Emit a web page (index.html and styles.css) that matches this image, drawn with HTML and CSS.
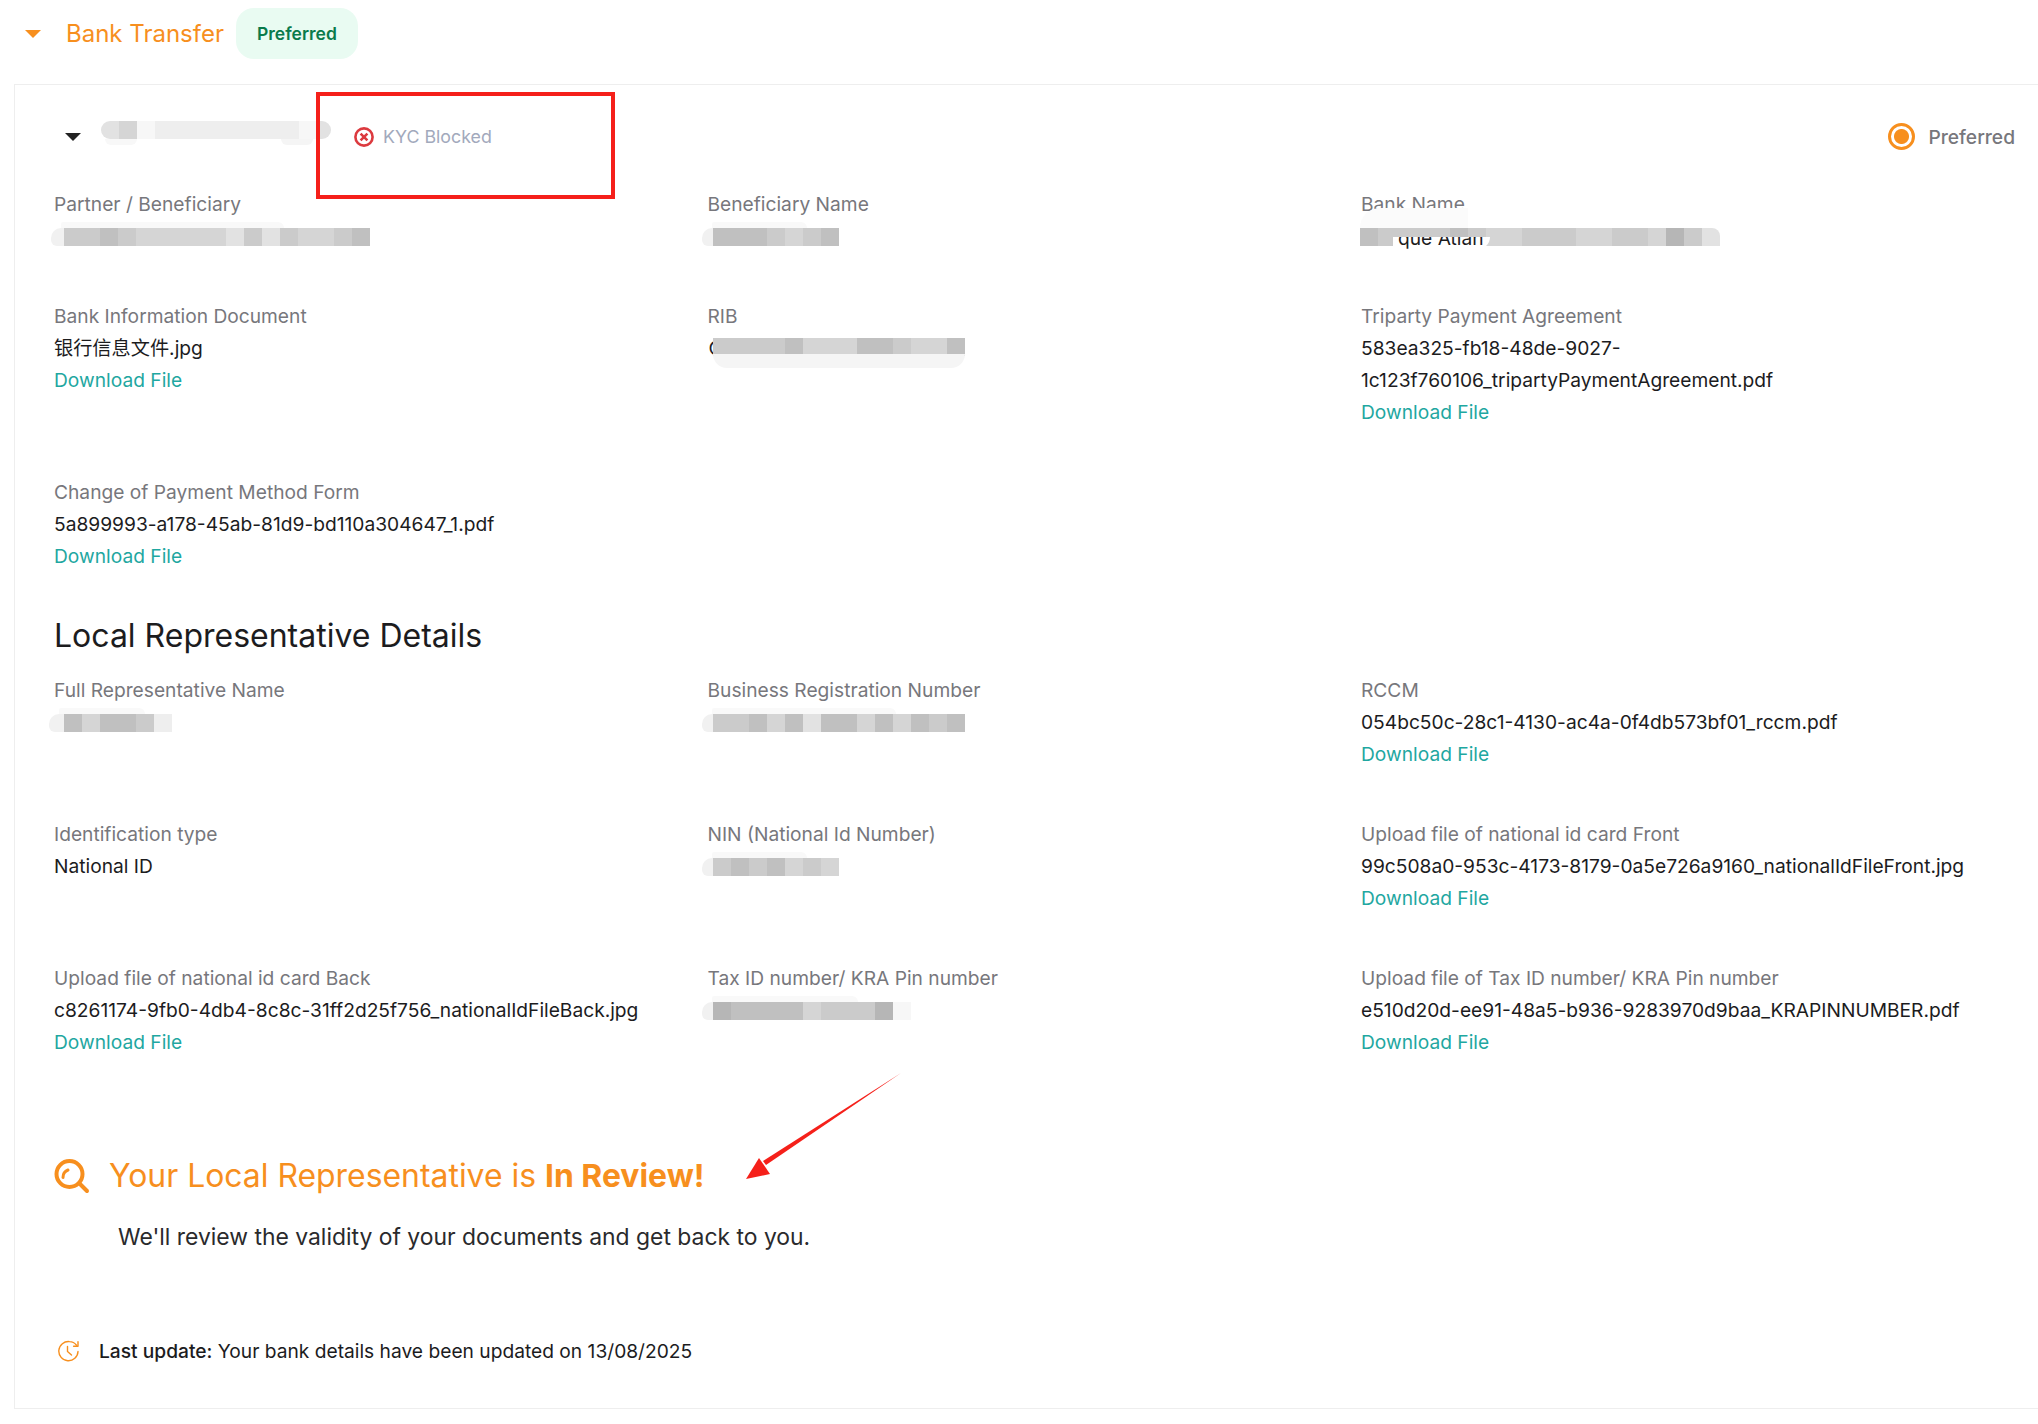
FILE: index.html

```html
<!DOCTYPE html>
<html lang="en">
<head>
    <meta charset="UTF-8">
    <meta name="viewport" content="width=device-width, initial-scale=1.0">
    <title>Bank Transfer</title>
    <link rel="stylesheet" href="styles.css">
</head>
<body>
    <!-- Method header -->
    <div class="method-head">
        <svg class="caret-orange" width="16" height="8" viewBox="0 0 16 8"><path d="M0 0h16L8 8z" fill="#f78f1e"/></svg>
        <span class="method-title">Bank Transfer</span>
        <span class="badge">Preferred</span>
    </div>

    <div class="card">
        <!-- Account row -->
        <div class="account-row">
            <svg class="caret-dark" width="16" height="8" viewBox="0 0 16 8"><path d="M0 0h16L8 8z" fill="#222"/></svg>
            <div class="redact account-name">
                <i class="s4"></i><i class="s3"></i><i class="s6"></i><i class="s5"></i><i class="s5"></i><i class="s5"></i><i class="s5"></i><i class="s5"></i><i class="s5"></i><i class="s5"></i><i class="s5"></i><i class="s6"></i><i class="s4"></i>
            </div>
            <div class="kyc">
                <svg width="20" height="20" viewBox="0 0 20 20" fill="none" stroke="#dc3a3f" stroke-width="2.6"><circle cx="10" cy="10" r="8.6"/><path d="M6.6 6.6l6.8 6.8M13.4 6.6l-6.8 6.8"/></svg>
                <span>KYC Blocked</span>
            </div>
            <div class="preferred-radio">
                <span class="radio"></span>
                <span>Preferred</span>
            </div>
        </div>

        <div class="grid">
            <div class="field">
                <div class="label">Partner / Beneficiary</div>
                <div class="redact w-partner">
                    <i class="lead"></i><i class="s2"></i><i class="s2"></i><i class="s1"></i><i class="s2"></i><i class="s3"></i><i class="s3"></i><i class="s3"></i><i class="s3"></i><i class="s3"></i><i class="s4"></i><i class="s2"></i><i class="s4"></i><i class="s2"></i><i class="s3"></i><i class="s3"></i><i class="s2"></i><i class="s1"></i>
                </div>
            </div>
            <div class="field">
                <div class="label">Beneficiary Name</div>
                <div class="redact w-lead">
                    <i class="lead"></i><i class="s1"></i><i class="s1"></i><i class="s1"></i><i class="s2"></i><i class="s3"></i><i class="s2"></i><i class="s1"></i>
                </div>
            </div>
            <div class="field">
                <div class="label">Bank Name</div>
                <div class="redact w-bank">
                    <i class="s1"></i><i class="s2"></i><i class="s2"></i><i class="s2"></i><i class="s2"></i><i class="s1"></i><i class="s2"></i><i class="s3"></i><i class="s3"></i><i class="s2"></i><i class="s2"></i><i class="s2"></i><i class="s3"></i><i class="s3"></i><i class="s2"></i><i class="s2"></i><i class="s3"></i><i class="s0"></i><i class="s2"></i><i class="s4"></i>
                    <span class="peek">que Atlan</span>
                </div>
            </div>

            <div class="field">
                <div class="label">Bank Information Document</div>
                <div class="value">银行信息文件.jpg</div>
                <a class="link" href="#">Download File</a>
            </div>
            <div class="field">
                <div class="label">RIB</div>
                <div class="redact w-rib">
                    <span class="under">C</span>
                    <i class="s2"></i><i class="s2"></i><i class="s2"></i><i class="s2"></i><i class="s1"></i><i class="s3"></i><i class="s3"></i><i class="s3"></i><i class="s1"></i><i class="s1"></i><i class="s2"></i><i class="s3"></i><i class="s3"></i><i class="s1"></i>
                </div>
            </div>
            <div class="field">
                <div class="label">Triparty Payment Agreement</div>
                <div class="value">583ea325-fb18-48de-9027-<br>1c123f760106_tripartyPaymentAgreement.pdf</div>
                <a class="link" href="#">Download File</a>
            </div>

            <div class="field">
                <div class="label">Change of Payment Method Form</div>
                <div class="value">5a899993-a178-45ab-81d9-bd110a304647_1.pdf</div>
                <a class="link" href="#">Download File</a>
            </div>
        </div>

        <h2 class="section-title">Local Representative Details</h2>

        <div class="grid">
            <div class="field">
                <div class="label">Full Representative Name</div>
                <div class="redact w-rep">
                    <i class="lead"></i><i class="s1"></i><i class="s3"></i><i class="s1"></i><i class="s1"></i><i class="s2"></i><i class="s5"></i>
                </div>
            </div>
            <div class="field">
                <div class="label">Business Registration Number</div>
                <div class="redact w-lead">
                    <i class="lead"></i><i class="s2"></i><i class="s2"></i><i class="s1"></i><i class="s3"></i><i class="s1"></i><i class="s4"></i><i class="s1"></i><i class="s1"></i><i class="s3"></i><i class="s1"></i><i class="s3"></i><i class="s1"></i><i class="s2"></i><i class="s1"></i>
                </div>
            </div>
            <div class="field">
                <div class="label">RCCM</div>
                <div class="value">054bc50c-28c1-4130-ac4a-0f4db573bf01_rccm.pdf</div>
                <a class="link" href="#">Download File</a>
            </div>

            <div class="field">
                <div class="label">Identification type</div>
                <div class="value">National ID</div>
            </div>
            <div class="field">
                <div class="label">NIN (National Id Number)</div>
                <div class="redact w-lead">
                    <i class="lead"></i><i class="s2"></i><i class="s1"></i><i class="s2"></i><i class="s1"></i><i class="s3"></i><i class="s2"></i><i class="s3"></i>
                </div>
            </div>
            <div class="field">
                <div class="label">Upload file of national id card Front</div>
                <div class="value">99c508a0-953c-4173-8179-0a5e726a9160_nationalIdFileFront.jpg</div>
                <a class="link" href="#">Download File</a>
            </div>

            <div class="field">
                <div class="label">Upload file of national id card Back</div>
                <div class="value">c8261174-9fb0-4db4-8c8c-31ff2d25f756_nationalIdFileBack.jpg</div>
                <a class="link" href="#">Download File</a>
            </div>
            <div class="field">
                <div class="label">Tax ID number/ KRA Pin number</div>
                <div class="redact w-lead">
                    <i class="lead"></i><i class="s0"></i><i class="s1"></i><i class="s1"></i><i class="s1"></i><i class="s1"></i><i class="s3"></i><i class="s2"></i><i class="s2"></i><i class="s2"></i><i class="s0"></i><i class="s6"></i>
                </div>
            </div>
            <div class="field">
                <div class="label">Upload file of Tax ID number/ KRA Pin number</div>
                <div class="value">e510d20d-ee91-48a5-b936-9283970d9baa_KRAPINNUMBER.pdf</div>
                <a class="link" href="#">Download File</a>
            </div>
        </div>

        <!-- Review status -->
        <div class="review-head">
            <svg width="36" height="36" viewBox="0 0 36 36" fill="none" stroke="#f78f1e" stroke-width="4" stroke-linecap="round"><circle cx="15.5" cy="16" r="13"/><path d="M9 19.5a8 8 0 0 1 5-7.5" stroke-width="3"/><path d="M26 26l7 7"/></svg>
            <span>Your Local Representative is <b>In Review!</b></span>
        </div>
        <p class="review-text">We'll review the validity of your documents and get back to you.</p>

        <div class="last-update">
            <svg width="22" height="22" viewBox="0 0 22 22" fill="none" stroke="#f78f1e" stroke-width="1.4" stroke-linecap="round" stroke-linejoin="round"><path d="M20 11.5A9.6 9.6 0 1 1 11.5 1.6c3 0 5 1 7 3.6"/><path d="M20 1.8v4.4h-4.4"/><path d="M9.5 6.5v5l4 3.5"/></svg>
            <span><b>Last update:</b> Your bank details have been updated on 13/08/2025</span>
        </div>
    </div>

    <!-- Review annotations drawn on top of the screenshot -->
    <div class="note-box"></div>
    <svg class="note-arrow" width="170" height="120" viewBox="0 0 170 120"><path d="M162 1L27 93l-3-4z" fill="#f5201a"/><path d="M7 107l13-21 11 16z" fill="#f5201a"/></svg>
</body>
</html>
```

FILE: styles.css

```css
body {
    margin: 0;
    font-family: Inter, "Noto Sans CJK SC", sans-serif;
    font-size: 19.2px;
    line-height: 32px;
    color: #1c1c1e;
    background-color: #fff;
    overflow-x: hidden;
}

/* Method header */
.method-head {
    display: flex;
    align-items: center;
    height: 51px;
    padding: 8px 0 25px 25px;
}
.caret-orange {
    margin-right: 25px;
}
.method-title {
    font-size: 24px;
    color: #f78f1e;
}
.badge {
    margin-left: 12px;
    padding: 0 21px;
    height: 51px;
    line-height: 51px;
    border-radius: 18px;
    background-color: #e9fbf2;
    color: #0a7a4b;
    font-size: 17.5px;
    font-weight: 600;
}

/* Card */
.card {
    width: 2040px;
    margin-left: 14px;
    padding: 0 0 41px 39px;
    border: 1px solid #eeeeee;
    box-sizing: border-box;
}
.account-row {
    display: flex;
    align-items: center;
    width: 1961px;
    height: 103px;
}
.caret-dark {
    margin-left: 11px;
}
.kyc {
    display: flex;
    align-items: center;
    margin-left: 23px;
    gap: 9px;
    font-size: 17.8px;
    color: #a2a9bc;
}
.preferred-radio {
    display: flex;
    align-items: center;
    gap: 13px;
    margin-left: auto;
    color: #77777c;
    font-weight: 500;
}
.radio {
    width: 27px;
    height: 27px;
    border: 3px solid #f78f1e;
    border-radius: 50%;
    box-sizing: border-box;
    background: radial-gradient(circle, #f78f1e 0 7px, #fff 8px);
}

.grid {
    display: grid;
    grid-template-columns: repeat(3, 653.5px);
    row-gap: 48px;
}
.label {
    color: #77777c;
}
.value {
    color: #1c1c1e;
}
.link {
    display: block;
    color: #1fa7a1;
    text-decoration: none;
}

/* Pixelated redactions */
.redact {
    display: flex;
    position: relative;
    width: fit-content;
    height: 32px;
    padding-top: 8px;
    box-sizing: border-box;
}
.redact::before {
    content: "";
    position: absolute;
    left: 10px;
    top: 2px;
    width: 70%;
    height: 6px;
    border-radius: 10px 30px 0 0;
    background-color: #f9f9f9;
}
.redact i {
    display: block;
    flex: 0 0 18px;
    height: 18px;
}
.redact i.lead {
    flex-basis: 11px;
    border-radius: 10px 0 0 6px;
    background-color: #f1f1f1;
}
.s0 { background-color: #b6b6b6; }
.s1 { background-color: #c0c0c0; }
.s2 { background-color: #cbcbcb; }
.s3 { background-color: #d5d5d5; }
.s4 { background-color: #e2e2e2; }
.s5 { background-color: #eeeeee; }
.s6 { background-color: #f7f7f7; }

.account-name {
    margin: -14px 0 0 20px;
    padding: 0;
    width: 230px;
    height: 18px;
}
.account-name i:first-child {
    border-radius: 9px 0 0 9px;
}
.account-name i:last-child {
    flex-basis: 14px;
    border-radius: 0 9px 9px 0;
}
/* Lighter blots hanging under the name */
.account-name::before {
    left: 4px;
    top: 18px;
    width: 32px;
    height: 6px;
    border-radius: 0 0 8px 8px;
    background-color: #f8f8f8;
    box-shadow: 176px 0 0 #f5f5f5;
}
.w-partner { margin-left: -3px; }
.w-partner i.lead { flex-basis: 13px; }
.w-lead { margin-left: -6px; }
.w-rep { margin-left: -5px; }
.w-rep i.lead { flex-basis: 15px; }
.w-bank { margin-left: -1px; }
.w-bank i:last-of-type {
    border-radius: 0 8px 0 0;
}
/* White smear that bites into the "Bank Name" label */
.w-bank::before {
    left: 0;
    top: -12px;
    width: 108px;
    height: 20px;
    border-radius: 44px 0 0 0;
    background-color: #fbfbfb;
}
.peek {
    position: absolute;
    left: 33px;
    top: 17px;
    width: 92px;
    height: 12px;
    padding-left: 5px;
    overflow: hidden;
    border-radius: 0 0 14px 0;
    background-color: #fff;
    line-height: 2px;
    color: #1c1c1e;
    white-space: nowrap;
}
.w-rib {
    margin-left: 5px;
    padding-top: 6px;
}
.w-rib::before {
    top: 22px;
    left: 0;
    width: 100%;
    height: 14px;
    border-radius: 0 0 20px 20px;
    background-color: #f5f5f5;
}
.under {
    position: absolute;
    left: -4px;
    top: 0;
    z-index: -1;
}

.section-title {
    margin: 42px 0 16px;
    font-size: 32px;
    font-weight: 400;
    line-height: 44px;
    color: #1c1c1e;
}

/* Review status */
.review-head {
    display: flex;
    align-items: center;
    gap: 19px;
    margin-top: 96px;
    height: 44px;
    font-size: 31.9px;
    color: #f78f1e;
}
.review-text {
    margin: 23px 0 0 64px;
    font-size: 22.9px;
    color: #2a2a2c;
}
.last-update {
    display: flex;
    align-items: center;
    gap: 19px;
    margin: 82px 0 0 4px;
    color: #1c1c1e;
}
.last-update b {
    font-weight: 500;
}

/* Annotations */
.note-box {
    position: absolute;
    left: 316px;
    top: 92px;
    width: 299px;
    height: 107px;
    border: 4px solid #f5201a;
    box-sizing: border-box;
}
.note-arrow {
    position: absolute;
    left: 739px;
    top: 1072px;
}
```
